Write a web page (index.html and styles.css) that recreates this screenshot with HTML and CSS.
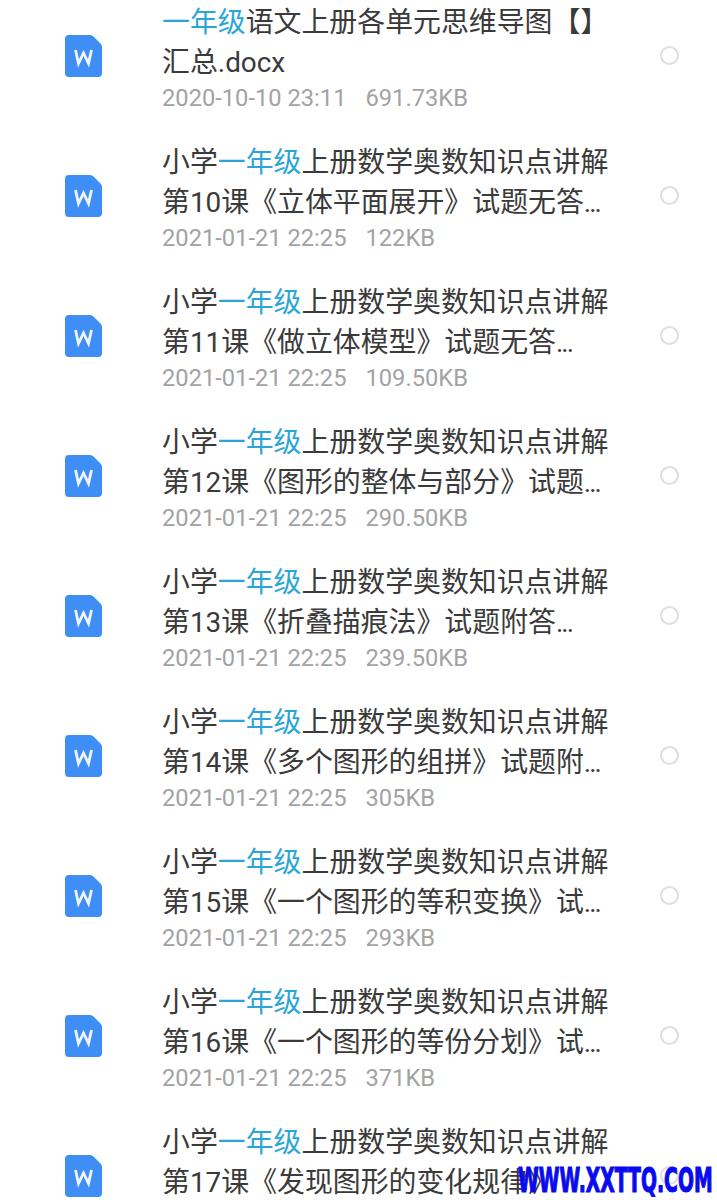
FILE: index.html
```html
<!DOCTYPE html>
<html lang="en">
<head>
    <meta charset="UTF-8">
    <meta name="viewport" content="width=device-width, initial-scale=1.0">
    <title>文件列表</title>
    <link rel="stylesheet" href="styles.css">
</head>
<body>
    <svg class="icon-defs" width="0" height="0">
        <symbol id="word-icon" viewBox="0 0 37 42">
            <path d="M4 0H25Q27 0 28.500 1.500L35.500 8.500Q37 10 37 12V38a4 4 0 0 1-4 4H4a4 4 0 0 1-4-4V4a4 4 0 0 1 4-4Z" fill="#3f8ef5"/>
            <path d="M10.500 15L13.500 28.500L18.500 18L23.500 28.500L26.500 15" fill="none" stroke="#fff" stroke-width="2.800" stroke-opacity="0.92"/>
        </symbol>
    </svg>

    <div class="file-list">
        <div class="file-row">
            <svg class="file-icon"><use href="#word-icon"/></svg>
            <div class="file-info">
                <div class="file-name"><span class="hl">一年级</span>语文上册各单元思维导图【】汇总.docx</div>
                <div class="file-meta"><span>2020-10-10 23:11</span><span>691.73KB</span></div>
            </div>
            <span class="radio"></span>
        </div>
        <div class="file-row">
            <svg class="file-icon"><use href="#word-icon"/></svg>
            <div class="file-info">
                <div class="file-name">小学<span class="hl">一年级</span>上册数学奥数知识点讲解第10课《立体平面展开》试题无答<span class="dots">...</span></div>
                <div class="file-meta"><span>2021-01-21 22:25</span><span>122KB</span></div>
            </div>
            <span class="radio"></span>
        </div>
        <div class="file-row">
            <svg class="file-icon"><use href="#word-icon"/></svg>
            <div class="file-info">
                <div class="file-name">小学<span class="hl">一年级</span>上册数学奥数知识点讲解第11课《做立体模型》试题无答<span class="dots">...</span></div>
                <div class="file-meta"><span>2021-01-21 22:25</span><span>109.50KB</span></div>
            </div>
            <span class="radio"></span>
        </div>
        <div class="file-row">
            <svg class="file-icon"><use href="#word-icon"/></svg>
            <div class="file-info">
                <div class="file-name">小学<span class="hl">一年级</span>上册数学奥数知识点讲解第12课《图形的整体与部分》试题<span class="dots">...</span></div>
                <div class="file-meta"><span>2021-01-21 22:25</span><span>290.50KB</span></div>
            </div>
            <span class="radio"></span>
        </div>
        <div class="file-row">
            <svg class="file-icon"><use href="#word-icon"/></svg>
            <div class="file-info">
                <div class="file-name">小学<span class="hl">一年级</span>上册数学奥数知识点讲解第13课《折叠描痕法》试题附答<span class="dots">...</span></div>
                <div class="file-meta"><span>2021-01-21 22:25</span><span>239.50KB</span></div>
            </div>
            <span class="radio"></span>
        </div>
        <div class="file-row">
            <svg class="file-icon"><use href="#word-icon"/></svg>
            <div class="file-info">
                <div class="file-name">小学<span class="hl">一年级</span>上册数学奥数知识点讲解第14课《多个图形的组拼》试题附<span class="dots">...</span></div>
                <div class="file-meta"><span>2021-01-21 22:25</span><span>305KB</span></div>
            </div>
            <span class="radio"></span>
        </div>
        <div class="file-row">
            <svg class="file-icon"><use href="#word-icon"/></svg>
            <div class="file-info">
                <div class="file-name">小学<span class="hl">一年级</span>上册数学奥数知识点讲解第15课《一个图形的等积变换》试<span class="dots">...</span></div>
                <div class="file-meta"><span>2021-01-21 22:25</span><span>293KB</span></div>
            </div>
            <span class="radio"></span>
        </div>
        <div class="file-row">
            <svg class="file-icon"><use href="#word-icon"/></svg>
            <div class="file-info">
                <div class="file-name">小学<span class="hl">一年级</span>上册数学奥数知识点讲解第16课《一个图形的等份分划》试<span class="dots">...</span></div>
                <div class="file-meta"><span>2021-01-21 22:25</span><span>371KB</span></div>
            </div>
            <span class="radio"></span>
        </div>
        <div class="file-row file-row-last">
            <svg class="file-icon"><use href="#word-icon"/></svg>
            <div class="file-info">
                <div class="file-name">小学<span class="hl">一年级</span>上册数学奥数知识点讲解第17课《发现图形的变化规律》</div>
            </div>
            <span class="radio"></span>
        </div>
    </div>
    <div class="watermark">WWW.XXTTQ.COM</div>
</body>
</html>
```

FILE: styles.css
```css
* {
    margin: 0;
    padding: 0;
    box-sizing: border-box;
}

html, body {
    height: 1200px;
    overflow: hidden;
}

body {
    position: relative;
    background: white;
    font-family: Roboto, 'Noto Sans CJK SC', sans-serif;
}

.icon-defs {
    display: block;
}

.file-list {
    margin-top: -14px;
}

.file-row {
    display: flex;
    align-items: center;
    height: 140px;
    padding-left: 65px;
}

.file-icon {
    width: 37px;
    height: 42px;
    flex-shrink: 0;
    margin-right: 60px;
}

.file-info {
    width: 452px;
    flex-shrink: 0;
    padding-top: 4px;
}

/* last row runs off the screen, its date line is not visible */
.file-row-last .file-info {
    padding-bottom: 31px;
}

.file-name {
    font-size: 27.900px;
    line-height: 40px;
    color: #3a3a3a;
}

.hl {
    color: #2ba5d8;
}

.dots {
    letter-spacing: -2px;
}

.file-meta {
    display: flex;
    gap: 19px;
    font-size: 23.700px;
    line-height: 31px;
    color: #a3a3a3;
}

.radio {
    width: 19px;
    height: 19px;
    margin-left: 46px;
    margin-top: -2px;
    border: 2px solid #dedede;
    border-radius: 50%;
    flex-shrink: 0;
}

.watermark {
    position: absolute;
    left: 518px;
    top: 1161px;
    font-family: 'DejaVu Sans', sans-serif;
    font-weight: 700;
    font-size: 33px;
    line-height: 40px;
    color: #0a0af0;
    -webkit-text-stroke: 1.200px #0a0af0;
    white-space: nowrap;
    transform: scaleX(0.570);
    transform-origin: left center;
}
```
